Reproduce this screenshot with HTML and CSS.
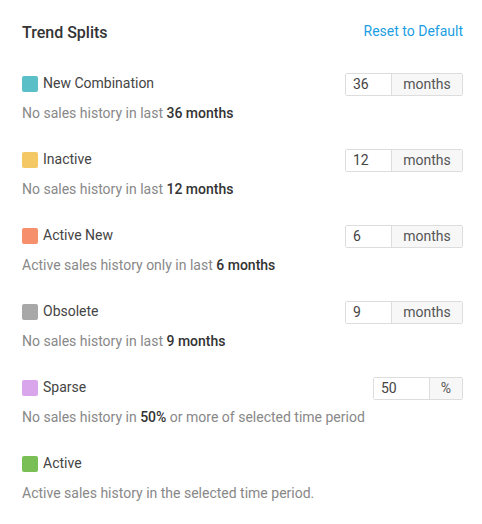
FILE: index.html
```html
<!DOCTYPE html>
<html lang="en">
    <head>
        <meta charset="UTF-8">
        <title>Trend Splits</title>
        <link rel="stylesheet" href="styles.css">
    </head>
    <body>
        <div class="panel">
            <!-- Titre -->
            <div class="panel-header">
                <h3>Trend Splits</h3>
                <a class="reset-link" href="#">Reset to Default</a>
            </div>

            <div class="split">
                <div class="split-head">
                    <span class="swatch teal"></span>
                    <span class="split-name">New Combination</span>
                    <div class="input-group">
                        <input type="text" class="num" value="36" />
                        <span class="addon">months</span>
                    </div>
                </div>
                <p class="split-desc">No sales history in last <b>36 months</b></p>
            </div>

            <div class="split">
                <div class="split-head">
                    <span class="swatch yellow"></span>
                    <span class="split-name">Inactive</span>
                    <div class="input-group">
                        <input type="text" class="num" value="12" />
                        <span class="addon">months</span>
                    </div>
                </div>
                <p class="split-desc">No sales history in last <b>12 months</b></p>
            </div>

            <div class="split">
                <div class="split-head">
                    <span class="swatch orange"></span>
                    <span class="split-name">Active New</span>
                    <div class="input-group">
                        <input type="text" class="num" value="6" />
                        <span class="addon">months</span>
                    </div>
                </div>
                <p class="split-desc">Active sales history only in last <b>6 months</b></p>
            </div>

            <div class="split">
                <div class="split-head">
                    <span class="swatch grey"></span>
                    <span class="split-name">Obsolete</span>
                    <div class="input-group">
                        <input type="text" class="num" value="9" />
                        <span class="addon">months</span>
                    </div>
                </div>
                <p class="split-desc">No sales history in last <b>9 months</b></p>
            </div>

            <div class="split">
                <div class="split-head">
                    <span class="swatch lilac"></span>
                    <span class="split-name">Sparse</span>
                    <div class="input-group small">
                        <input type="text" class="num" value="50" />
                        <span class="addon">%</span>
                    </div>
                </div>
                <p class="split-desc">No sales history in <b>50%</b> or more of selected time period</p>
            </div>

            <div class="split">
                <div class="split-head">
                    <span class="swatch green"></span>
                    <span class="split-name">Active</span>
                </div>
                <p class="split-desc">Active sales history in the selected time period.</p>
            </div>
        </div>
    </body>
</html>
```

FILE: styles.css
```css
/* Global */
body, html {
    margin: 0;
    padding: 0;
    background-color: #ffffff;
    font-family: Roboto, 'Liberation Sans', sans-serif;
    color: #444444;
}

.panel {
    padding: 22px 19px 0 22px;
}

/* En-tête */
.panel-header {
    display: flex;
    justify-content: space-between;
    align-items: center;
    height: 20px;
    margin-bottom: 31px;
}

.panel-header h3 {
    margin: 0;
    font-size: 16px;
    font-weight: 500;
    color: #333333;
}

.reset-link {
    font-size: 14px;
    color: #1b9ee3;
    text-decoration: none;
    margin-top: -2px;
}

/* Lignes */
.split {
    margin-bottom: 26px;
}

.split-head {
    display: flex;
    align-items: center;
    height: 24px;
}

.swatch {
    width: 16px;
    height: 16px;
    border-radius: 2px;
    margin-right: 5px;
    margin-top: -3px;
}
.swatch.teal { background-color: #5bbfc8; }
.swatch.yellow { background-color: #f5c866; }
.swatch.orange { background-color: #f6906c; }
.swatch.grey { background-color: #a8a8a8; }
.swatch.lilac { background-color: #d9a6ec; }
.swatch.green { background-color: #7abe56; }

.split-name {
    font-size: 14px;
    color: #444444;
    flex-grow: 1;
    margin-top: -4px;
}

.input-group {
    display: flex;
    height: 23px;
    margin-top: -2px;
    border: 1px solid #dddddd;
    border-radius: 2px;
    box-sizing: border-box;
    width: 118px;
}

.input-group .num {
    width: 46px;
    border: none;
    border-right: 1px solid #dddddd;
    padding: 0 0 0 7px;
    box-sizing: border-box;
    font-family: Roboto, 'Liberation Sans', sans-serif;
    font-size: 14px;
    color: #444444;
    outline: none;
}

.input-group .addon {
    flex-grow: 1;
    background-color: #f7f7f7;
    font-size: 14px;
    color: #555555;
    display: flex;
    align-items: center;
    justify-content: center;
}

.input-group.small {
    width: 90px;
}
.input-group.small .num {
    width: 56px;
}

.split-desc {
    margin: 6px 0 0 0;
    font-size: 14px;
    line-height: 20px;
    color: #888888;
}

.split-desc b {
    font-weight: 500;
    color: #333333;
}
```
